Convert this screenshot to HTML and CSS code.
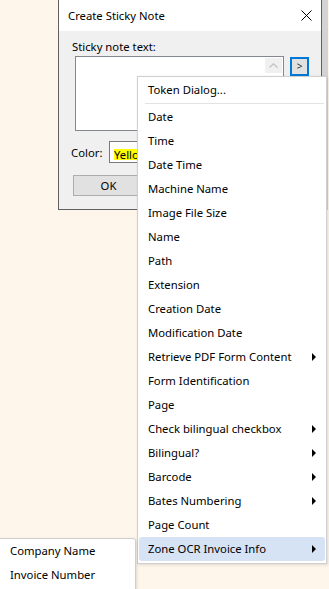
FILE: index.html
```html
<!DOCTYPE html>
<html lang="en">
<head>
  <meta charset="UTF-8">
  <meta name="viewport" content="width=device-width, initial-scale=1.0">
  <title>Create Sticky Note</title>
  <link rel="stylesheet" href="styles.css">
</head>
<body>
  <div class="desktop">
    <div class="dialog">
      <div class="titlebar">
        <span class="title">Create Sticky Note</span>
        <svg class="close" width="11" height="11" viewBox="0 0 11 11">
          <path d="M0.5 0.5 L10.5 10.5 M10.5 0.5 L0.5 10.5" stroke="#000" stroke-width="1" fill="none"/>
        </svg>
      </div>
      <div class="dialog-body">
        <div class="label">Sticky note text:</div>
        <div class="text-row">
          <div class="textbox">
            <div class="scroll-up">
              <svg width="9" height="5" viewBox="0 0 9 5"><path d="M0.5 4.5 L4.5 0.8 L8.5 4.5" stroke="#c2c2c2" stroke-width="1.3" fill="none"/></svg>
            </div>
          </div>
          <button class="token-btn">&gt;</button>
        </div>
        <div class="color-row">
          <span class="color-label">Color:</span>
          <div class="color-select"><span class="swatch">Yellow</span></div>
        </div>
        <div class="button-row">
          <button class="btn">OK</button>
        </div>
      </div>
    </div>

    <ul class="menu main-menu">
      <li class="item">Token Dialog...</li>
      <li class="sep"></li>
      <li class="item">Date</li>
      <li class="item">Time</li>
      <li class="item">Date Time</li>
      <li class="item">Machine Name</li>
      <li class="item">Image File Size</li>
      <li class="item">Name</li>
      <li class="item">Path</li>
      <li class="item">Extension</li>
      <li class="item">Creation Date</li>
      <li class="item">Modification Date</li>
      <li class="item has-sub">Retrieve PDF Form Content</li>
      <li class="item">Form Identification</li>
      <li class="item">Page</li>
      <li class="item has-sub">Check bilingual checkbox</li>
      <li class="item has-sub">Bilingual?</li>
      <li class="item has-sub">Barcode</li>
      <li class="item has-sub">Bates Numbering</li>
      <li class="item">Page Count</li>
      <li class="item has-sub active">Zone OCR Invoice Info</li>
    </ul>

    <ul class="menu sub-menu">
      <li class="item">Company Name</li>
      <li class="item">Invoice Number</li>
    </ul>
  </div>
</body>
</html>
```

FILE: styles.css
```css
body {
  margin: 0;
  background: #fef6eb;
  font-family: 'Noto Sans', 'Open Sans', sans-serif;
  font-size: 11.3px;
  color: #000;
}
.desktop {
  position: relative;
  width: 329px;
  height: 589px;
  overflow: hidden;
}

/* dialog window */
.dialog {
  position: absolute;
  left: 58px;
  top: 0;
  width: 264px;
  box-sizing: border-box;
  border: 1px solid #606060;
  border-top: none;
  background: #f0f0f0;
  box-shadow: 6px 0 0 #d3d3d3;
}
.titlebar {
  height: 31px;
  background: #fff;
  display: flex;
  align-items: center;
  justify-content: space-between;
  padding: 0 9px;
}
.close {
  display: block;
}
.dialog-body {
  padding: 9px 12px 13px;
}
.label {
  line-height: 14px;
  padding-left: 1px;
}
.text-row {
  display: flex;
  align-items: flex-start;
  margin-top: 2px;
}
.textbox {
  width: 209px;
  height: 75px;
  box-sizing: border-box;
  margin-left: 4px;
  background: #fff;
  border: 1px solid #828790;
  display: flex;
  justify-content: flex-end;
  padding: 1px;
}
.scroll-up {
  width: 17px;
  height: 15px;
  background: #f0f0f0;
  display: flex;
  align-items: center;
  justify-content: center;
}
.scroll-up svg {
  display: block;
}
.token-btn {
  width: 19px;
  height: 19px;
  margin: 1px 0 0 6px;
  padding: 0;
  box-sizing: border-box;
  border: 2px solid #0078d7;
  background: #e1e1e1;
  font-family: inherit;
  font-size: 10px;
  line-height: 13px;
  color: #333;
}
.color-row {
  display: flex;
  align-items: center;
  margin-top: 10px;
}
.color-label {
  width: 38px;
}
.color-select {
  width: 120px;
  height: 22px;
  box-sizing: border-box;
  border: 1px solid #7a7a7a;
  background: #fff;
  padding: 5px 4px;
}
.swatch {
  display: inline-block;
  background: #ffff00;
  line-height: 11px;
  padding-right: 2px;
}
.button-row {
  display: flex;
  gap: 8px;
  margin-top: 12px;
  padding-left: 2px;
}
.btn {
  width: 71px;
  height: 21px;
  box-sizing: border-box;
  border: 1px solid #adadad;
  background: #e1e1e1;
  font-family: inherit;
  font-size: 11.3px;
  padding: 0;
  color: #000;
}

/* context menus */
.menu {
  position: absolute;
  margin: 0;
  list-style: none;
  background: #fff;
  border: 1px solid #cfcfcf;
  box-sizing: border-box;
  box-shadow: 1px 1px 3px rgba(0, 0, 0, 0.12);
}
.main-menu {
  left: 137px;
  top: 76px;
  width: 190px;
  height: 488px;
  padding: 1px;
}
.sub-menu {
  left: -6px;
  top: 538px;
  width: 142px;
  padding: 0 1px 20px 1px;
  border-radius: 0 3px 0 0;
}
.item {
  position: relative;
  height: 24px;
  line-height: 24px;
  padding-left: 9px;
  white-space: nowrap;
}
.sub-menu .item {
  padding-left: 14px;
}
.sep {
  height: 1px;
  margin: 1px 1px 1px 6px;
  background: #e3e3e3;
}
.has-sub::after {
  content: '';
  position: absolute;
  right: 9px;
  top: 8px;
  border-left: 4px solid #000;
  border-top: 4px solid transparent;
  border-bottom: 4px solid transparent;
}
.active {
  background: #d6e3f5;
  border-radius: 3px;
}
```
